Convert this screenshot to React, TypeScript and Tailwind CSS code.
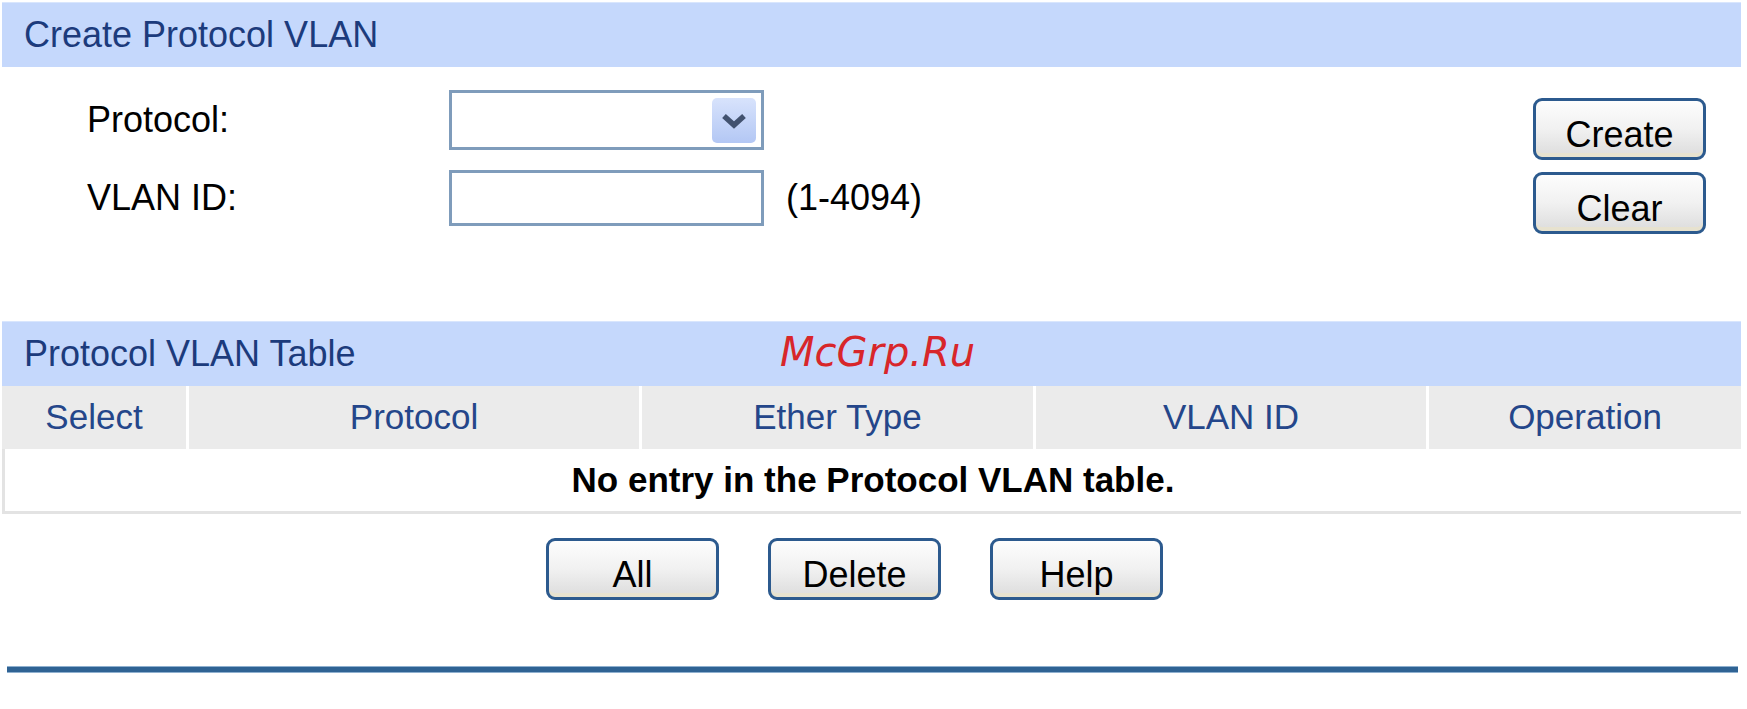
import React from 'react';

const headCols = [
  { label: 'Select', w: 'w-[184px]' },
  { label: 'Protocol', w: 'w-[453px]' },
  { label: 'Ether Type', w: 'w-[394px]' },
  { label: 'VLAN ID', w: 'w-[393px]' },
  { label: 'Operation', w: 'flex-1' },
];

function Btn({ label }: { label: string }) {
  return (
    <button className="w-[173px] h-[62px] rounded-[9px] border-[3px] border-[#2c5a8e] bg-gradient-to-b from-[#fdfdfd] via-[#f1f1f1] to-[#dcdcdc] text-[36px] leading-none text-black pt-[11px] shadow-[inset_0_-4px_0_#e7e2cf]">
      {label}
    </button>
  );
}

export default function App() {
  return (
    <div className="relative w-[1747px] h-[709px] bg-white overflow-hidden font-['Liberation_Sans',Arial,sans-serif]">
      {/* Create section */}
      <div className="mt-[2px] ml-[2px] w-[1739px] h-[65px] bg-[#c5d8fc] border-t border-[#d9e6fd] flex items-center pl-[22px] text-[36px] text-[#1c3b7c]">
        Create Protocol VLAN
      </div>

      <div className="h-[254px] flex">
        <div className="pt-[23px] pl-[87px]">
          <div className="flex items-center h-[60px]">
            <span className="w-[362px] text-[36px] text-black">Protocol:</span>
            <div className="relative w-[315px] h-[60px] border-[3px] border-[#7f9cbb] bg-white">
              <div className="absolute right-[5px] top-[5px] w-[44px] h-[45px] rounded-[5px] bg-gradient-to-b from-[#d8e3fc] to-[#b3c7f4] flex items-center justify-center">
                <svg width="26" height="18" viewBox="0 0 26 18">
                  <path d="M3 4 L13 13 L23 4" fill="none" stroke="#42526f" strokeWidth="5.5" strokeLinejoin="miter" />
                </svg>
              </div>
            </div>
          </div>
          <div className="flex items-center h-[56px] mt-[20px]">
            <span className="w-[362px] text-[36px] text-black">VLAN ID:</span>
            <div className="w-[315px] h-[56px] border-[3px] border-[#7f9cbb] bg-white" />
            <span className="ml-[22px] text-[36px] text-black">(1-4094)</span>
          </div>
        </div>
        <div className="ml-auto mr-[41px] pt-[31px] flex flex-col gap-[12px]">
          <Btn label="Create" />
          <Btn label="Clear" />
        </div>
      </div>

      {/* Table section */}
      <div className="ml-[2px] w-[1739px] h-[65px] bg-[#c5d8fc] border-t border-[#d9e6fd] flex items-center pl-[22px] text-[36px] text-[#1c3b7c]">
        Protocol VLAN Table
      </div>
      <div className="ml-[2px] w-[1739px] flex h-[63px] bg-[#ebebeb]">
        {headCols.map((c, i) => (
          <div
            key={c.label}
            className={`${c.w} flex items-center justify-center text-[35px] text-[#24468a] ${i > 0 ? 'border-l-[3px] border-white' : ''}`}
          >
            {c.label}
          </div>
        ))}
      </div>
      <div className="ml-[2px] w-[1739px] h-[65px] border-l-[3px] border-b-[3px] border-[#e3e3e3] flex items-center justify-center text-[35px] font-bold text-black">
        No entry in the Protocol VLAN table.
      </div>

      <div className="mt-[24px] pl-[546px] flex gap-[49px]">
        <Btn label="All" />
        <Btn label="Delete" />
        <Btn label="Help" />
      </div>

      <div className="mt-[66px] ml-[7px] w-[1731px] h-[7px] bg-[#2f6394] border-y border-[#8fb0cf]" />

      {/* watermark */}
      <div className="absolute left-[780px] top-[332px] text-[40px] italic text-[#d8262a] font-['DejaVu_Sans',sans-serif] leading-none">
        McGrp.Ru
      </div>
    </div>
  );
}
